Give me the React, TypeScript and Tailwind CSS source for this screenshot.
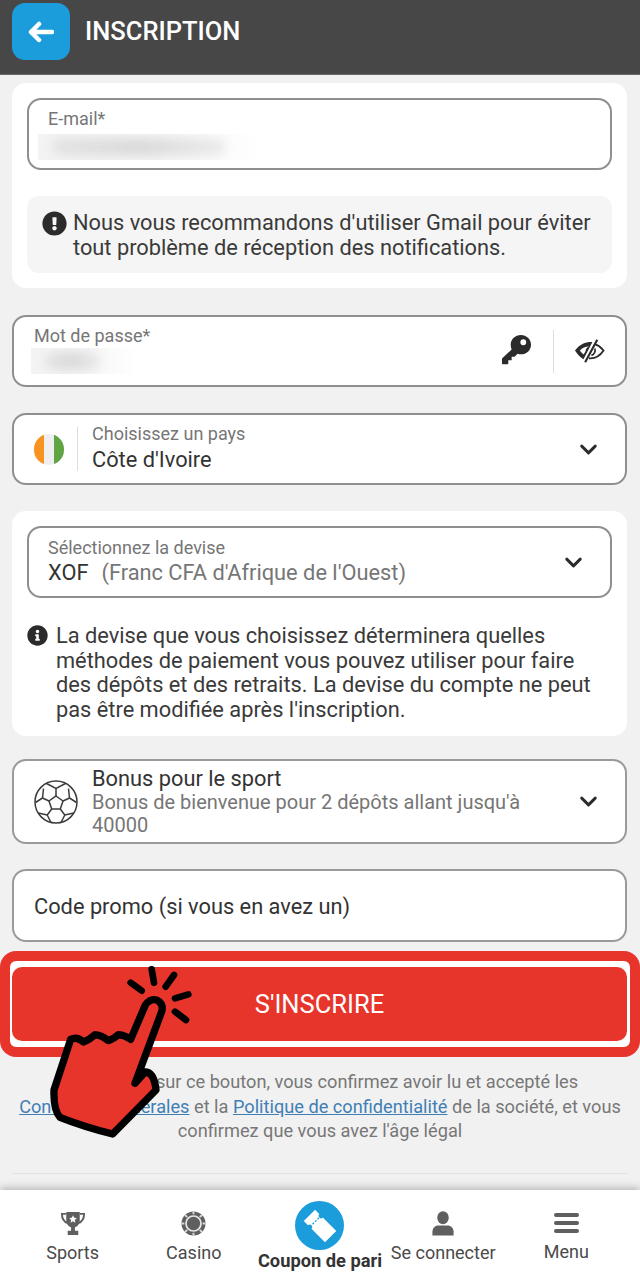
import { ChevronDown } from "lucide-react";
import { FaExclamationCircle, FaInfoCircle } from "react-icons/fa";

function Redacted({ w }: { w: string }) {
  return (
    <div className={`${w} h-[26px] bg-gradient-to-r from-[#f3f3f3] via-[#f5f5f5] to-white overflow-hidden`}>
      <div className="ml-[14px] mr-[36px] mt-[4px] h-[18px] rounded-full bg-gradient-to-r from-[#e4e4e4] via-[#dadada] to-[#ececec] blur-[5px]" />
    </div>
  );
}

function Chevron() {
  return <ChevronDown className="w-[27px] h-[27px] text-[#2b2b2b]" strokeWidth={2.6} />;
}

function Key() {
  return (
    <svg viewBox="0 0 32 32" className="w-[31px] h-[31px] -mt-[3px]">
      <path fillRule="evenodd" fill="#2b2b2b" d="M20.500 1C26.300 1 31 5.400 31 11s-4.700 10-10.500 10c-1.200 0-2.400-.2-3.400-.6L14 23.500h-3V27H7.500v3.500c0 .5-.4.800-.8.800H2c-.6 0-1-.4-1-1v-4.500c0-.3.100-.5.300-.7L11 16c-.6-1.400-1-3-1-4.800C10 5.400 14.700 1 20.500 1zm2.500 4.500a3 3 0 1 0 0 6 3 3 0 0 0 0-6z" />
    </svg>
  );
}

function EyeOff() {
  return (
    <svg viewBox="0 0 32 24" className="w-[31px] h-[24px]">
      <path fillRule="evenodd" fill="#2b2b2b" d="M1 11.500C6 5 12 2.500 19 2.800L9.800 20.500C6.300 18.500 3.300 15.200 1 11.500zm5 0c1.200 1.700 2.500 3 4 4.200L12 12c0-2 1-3.800 3.500-5C11.800 7.300 8.500 8.800 6 11.500z" />
      <path d="M21.500 5c3.500 1 6.500 3.500 9 6.500-3.300 5-8.500 8.500-15 8" fill="none" stroke="#2b2b2b" strokeWidth="1.900" />
      <path d="M21.500 9.500c1 3-.5 6-3.500 7" fill="none" stroke="#2b2b2b" strokeWidth="1.700" />
      <path d="M24 0.500L11.500 23.500" stroke="#2b2b2b" strokeWidth="2.200" />
    </svg>
  );
}

function Ball() {
  return (
    <svg viewBox="0 0 44 44" className="w-[44px] h-[44px] shrink-0" fill="none" stroke="#3c3c3c" strokeWidth="1.500">
      <circle cx="22" cy="22" r="21" />
      <path d="M22 16l7 5-2.700 8h-8.600L15 21z" />
      <path d="M22 16V8.500M29 21l6.500-3M26.300 29l4.500 6M17.700 29l-4.500 6M15 21l-6.500-3" />
      <path d="M12.500 3.500L22 8.500l9.500-5M35.500 18l-1-9.500M35.500 18l7 4.500M30.800 35l9-2M30.800 35L27 42.500M13.200 35L17 42.500M13.200 35l-9-2M8.500 18l-7 4.500M8.500 18l1-9.500" />
    </svg>
  );
}

function Trophy() {
  return (
    <svg viewBox="0 0 26 26" className="w-[26px] h-[25px]">
      <path d="M6 1h14v9c0 4-3 6.500-5 7v3.500h3.500V25h-11v-4.500H11V17c-2-.5-5-3-5-7z" fill="#5f5f5f" />
      <path d="M6 3H1.500c0 5 1.500 8 6 9.500M20 3h4.500c0 5-1.500 8-6 9.500" fill="none" stroke="#5f5f5f" strokeWidth="2" />
      <path d="M13 4.500l1.200 2.600 2.800.3-2.100 1.900.6 2.800-2.500-1.400-2.500 1.400.6-2.800L9 7.400l2.800-.3z" fill="#fff" />
    </svg>
  );
}

function Chip() {
  return (
    <svg viewBox="0 0 26 26" className="w-[25px] h-[25px]">
      <circle cx="13" cy="13" r="12.500" fill="#5f5f5f" />
      <circle cx="13" cy="13" r="7.800" fill="none" stroke="#e6e6e6" strokeWidth="1.800" />
      <path d="M13 .5v3M13 22.500v3M.5 13h3M22.500 13h3M4.200 4.200l2.200 2.200M19.600 19.600l2.200 2.200M21.800 4.200l-2.200 2.200M6.400 19.600l-2.200 2.200" stroke="#d8d8d8" strokeWidth="2" />
    </svg>
  );
}

function Ticket() {
  return (
    <svg viewBox="-20 -20 40 40" className="w-[40px] h-[40px]">
      <g transform="rotate(45)">
        <path d="M-15-8H-9a2.500 2.500 0 0 0 5 0H15V8H-4a2.500 2.500 0 0 0-5 0H-15z" fill="#fff" />
        <path d="M-6.500-5V5" stroke="#1c9ddb" strokeWidth="1.300" strokeDasharray="2 1.500" />
      </g>
    </svg>
  );
}

function User() {
  return (
    <svg viewBox="0 0 24 26" className="w-[24px] h-[25px]" fill="#5f5f5f">
      <ellipse cx="12" cy="7" rx="6" ry="6.800" />
      <path d="M1 25.500v-4c0-4 3-6.500 6-6.500h10c3 0 6 2.500 6 6.500v4z" />
    </svg>
  );
}

function Burger() {
  return (
    <div className="flex flex-col gap-[4px] w-[25px]">
      <div className="h-[4px] rounded-full bg-[#5f5f5f]" />
      <div className="h-[4px] rounded-full bg-[#5f5f5f]" />
      <div className="h-[4px] rounded-full bg-[#5f5f5f]" />
    </div>
  );
}

// pointing hand drawn over the button
function Hand() {
  return (
    <svg viewBox="0 0 960 600" className="absolute left-0 top-[-1px] w-[320px] h-[200px]">
      <path
        d="M405 400L435 366Q462 366 468 420L338 552Q250 530 180 502Q160 480 162 420L212 268Q232 258 250 276Q268 270 285 254Q305 256 325 272Q340 268 355 254Q375 256 392 268L436 165Q450 145 470 150Q490 160 486 182z"
        fill="#e8352c"
        stroke="#000"
        strokeWidth="22"
        strokeLinejoin="round"
      />
      <g stroke="#000" strokeWidth="20" strokeLinecap="round">
        <path d="M455 58L462 98M522 75L497 110M565 133L525 145M525 185L558 210M392 98L425 122" />
      </g>
    </svg>
  );
}

export default function App() {
  return (
    <div className="relative h-[1280px] w-[640px] overflow-hidden bg-[#f1f1f1] font-['Roboto',sans-serif] text-[#2f2f2f]">
      <header className="h-[75px] bg-[#474747] pl-[12px] pt-[3px] border-b border-[#6a6a6a]">
        <div className="flex items-center">
          <div className="w-[58px] h-[57px] rounded-[13px] bg-[#1c9ddb] flex items-center justify-center">
            <svg viewBox="0 0 26 22" className="w-[26px] h-[22px]" fill="none" stroke="#fff" strokeWidth="4.500" strokeLinecap="round" strokeLinejoin="round">
              <path d="M24 11H3M11 3l-8 8 8 8" />
            </svg>
          </div>
          <h1 className="ml-[15px] text-[25.500px] font-medium text-white">INSCRIPTION</h1>
        </div>
      </header>

      <main className="pl-[12px] pr-[13px]">
        <section className="mt-[8px] h-[205px] rounded-[14px] bg-white px-[15px] pt-[15px]">
          <div className="h-[72px] rounded-[14px] border-2 border-[#8f8f8f] pl-[9px] pt-[9px]">
            <div className="pl-[10px] text-[18px] leading-[20px] text-[#767676]">E-mail*</div>
            <div className="mt-[5px]"><Redacted w="w-[224px]" /></div>
          </div>
          <div className="mt-[26px] h-[77px] rounded-[12px] bg-[#f5f5f5] px-[15px] flex gap-[6px] pt-[15px]">
            <FaExclamationCircle className="w-[25px] h-[25px] shrink-0 text-[#2b2b2b]" />
            <p className="text-[21.800px] leading-[24.500px] text-[#3a3a3a]">
              Nous vous recommandons d'utiliser Gmail pour éviter tout problème de réception des notifications.
            </p>
          </div>
        </section>

        <div className="mt-[27px] h-[72px] rounded-[14px] border-2 border-[#8f8f8f] bg-white flex items-center">
          <div className="flex-1 pl-[17px] -mt-[2px]">
            <div className="pl-[3px] text-[18px] leading-[20px] text-[#767676]">Mot de passe*</div>
            <div className="mt-[2px]"><Redacted w="w-[106px]" /></div>
          </div>
          <Key />
          <div className="ml-[21px] w-px h-[43px] bg-[#dddddd]" />
          <div className="ml-[20px] mr-[20px] flex"><EyeOff /></div>
        </div>

        <div className="mt-[26px] h-[72px] rounded-[14px] border-2 border-[#8f8f8f] bg-white flex items-center pl-[20px] pr-[23px]">
          <div className="w-[30px] h-[31px] rounded-full overflow-hidden flex shrink-0">
            <div className="flex-1 bg-[#f7931e]" />
            <div className="flex-1 bg-[#efefef]" />
            <div className="flex-1 bg-[#5fa544]" />
          </div>
          <div className="ml-[13px] w-px h-[44px] bg-[#dddddd]" />
          <div className="ml-[14px] flex-1 -mt-[1px]">
            <div className="text-[18px] leading-[21px] text-[#767676]">Choisissez un pays</div>
            <div className="mt-[2px] text-[21.800px] leading-[28px] text-[#333333]">Côte d'Ivoire</div>
          </div>
          <Chevron />
        </div>

        <section className="mt-[26px] h-[225px] rounded-[14px] bg-white px-[15px] pt-[15px]">
          <div className="h-[72px] rounded-[14px] border-2 border-[#8f8f8f] flex items-center pl-[19px] pr-[23px]">
            <div className="flex-1">
              <div className="text-[18px] leading-[22px] text-[#767676]">Sélectionnez la devise</div>
              <div className="text-[21.800px] leading-[28px] text-[#767676]">
                <span className="text-[#333333]">XOF</span>
                <span className="ml-[13px]">(Franc CFA d'Afrique de l'Ouest)</span>
              </div>
            </div>
            <Chevron />
          </div>
          <div className="mt-[26px] flex gap-[8px]">
            <FaInfoCircle className="w-[21px] h-[21px] mt-[1px] shrink-0 text-[#2b2b2b]" />
            <p className="text-[21.800px] leading-[24.500px] text-[#3a3a3a]">
              La devise que vous choisissez déterminera quelles méthodes de paiement vous pouvez utiliser pour faire des dépôts et des retraits. La devise du compte ne peut pas être modifiée après l'inscription.
            </p>
          </div>
        </section>

        <div className="mt-[23px] h-[85px] rounded-[14px] border-2 border-[#9a9a9a] bg-white flex items-center pl-[20px] pr-[23px]">
          <Ball />
          <div className="ml-[14px] flex-1">
            <div className="text-[21.800px] leading-[24px] text-[#333333]">Bonus pour le sport</div>
            <div className="w-[440px] text-[20px] leading-[23px] text-[#767676]">Bonus de bienvenue pour 2 dépôts allant jusqu'à 40000</div>
          </div>
          <Chevron />
        </div>

        <div className="mt-[25px] h-[73px] rounded-[14px] border-2 border-[#9a9a9a] bg-white flex items-center pl-[20px] pt-[3px] text-[21.800px] text-[#333333]">
          Code promo (si vous en avez un)
        </div>
      </main>

      <div className="relative">
        <div className="mt-[9px] h-[106px] rounded-[16px] border-[10px] border-[#e8352c] bg-white pl-[2px] pr-[3px] py-[6px]">
          <button className="w-full h-full rounded-[10px] bg-[#e8352c] text-[25.500px] text-white">S'INSCRIRE</button>
        </div>
        <p className="mt-[13px] px-[12px] text-center text-[18.200px] leading-[24.500px] whitespace-nowrap text-[#777777]">
          En cliquant sur ce bouton, vous confirmez avoir lu et accepté les
          <br />
          <span className="text-[#3f7fb5] underline">Conditions générales</span> et la{" "}
          <span className="text-[#3f7fb5] underline">Politique de confidentialité</span> de la société, et vous
          <br />
          confirmez que vous avez l'âge légal
        </p>
        <div className="mx-[12px] mt-[29px] h-px bg-[#e2e2e2]" />
        <Hand />
      </div>

      <nav className="absolute bottom-0 left-0 right-0 h-[90px] bg-white shadow-[0_-2px_8px_rgba(0,0,0,0.25)] grid grid-cols-5 px-[12px] text-[18px] text-[#4a4a4a]">
        <div className="flex flex-col items-center pt-[21px] pr-[2px]">
          <Trophy />
          <span className="mt-[5px] leading-[24px]">Sports</span>
        </div>
        <div className="flex flex-col items-center pt-[21px] pr-[6px]">
          <Chip />
          <span className="mt-[5px] leading-[24px]">Casino</span>
        </div>
        <div className="flex flex-col items-center pt-[11px]">
          <div className="w-[49px] h-[49px] rounded-full bg-[#1c9ddb] flex items-center justify-center"><Ticket /></div>
          <span className="-mt-[1px] whitespace-nowrap font-bold text-[#333333] text-[18.300px] leading-[24px]">Coupon de pari</span>
        </div>
        <div className="flex flex-col items-center pt-[21px]">
          <User />
          <span className="mt-[5px] whitespace-nowrap leading-[24px]">Se connecter</span>
        </div>
        <div className="flex flex-col items-center pt-[23px]">
          <Burger />
          <span className="mt-[7px] leading-[24px]">Menu</span>
        </div>
      </nav>
    </div>
  );
}
